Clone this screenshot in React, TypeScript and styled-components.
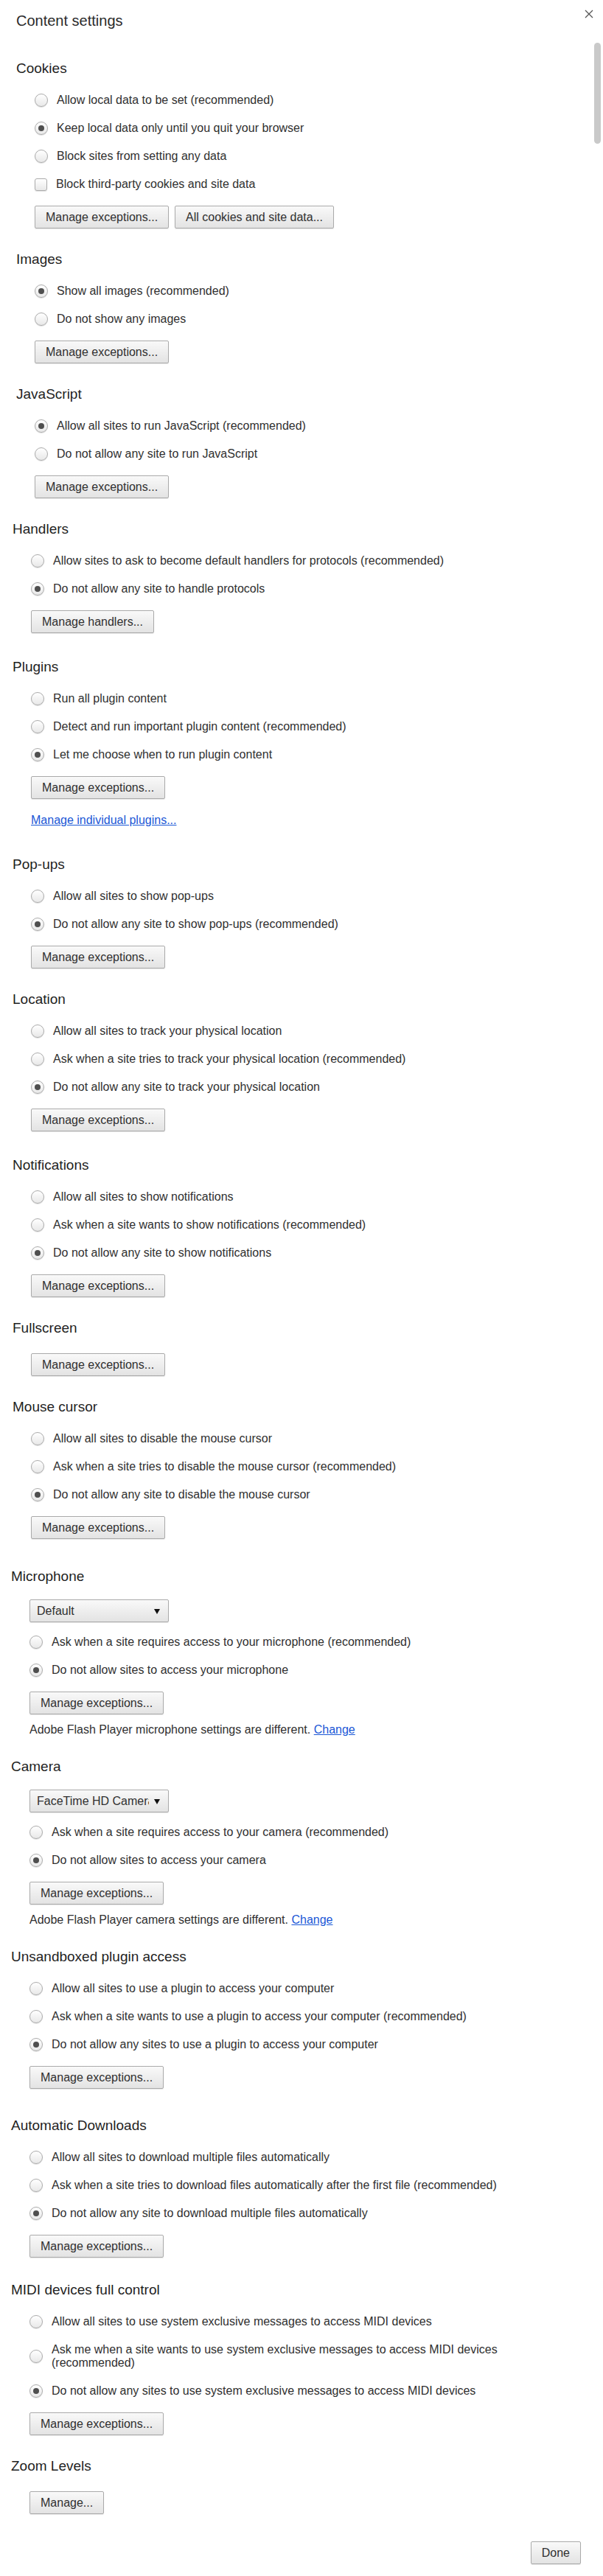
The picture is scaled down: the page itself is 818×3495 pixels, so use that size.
import React from 'react';
import styled, { createGlobalStyle } from 'styled-components';

const GlobalStyle = createGlobalStyle`
  html, body {
    margin: 0;
    padding: 0;
    background: #fff;
  }
  body {
    font-family: "Liberation Sans", Arial, Helvetica, sans-serif;
    color: #303030;
  }
`;

const Dialog = styled.div`
  position: relative;
  display: flex;
  flex-direction: column;
  width: 818px;
  height: 3495px;
  overflow: hidden;
  box-sizing: border-box;
  padding-top: 16px;
  background: #fff;
`;

const Title = styled.h1`
  margin: 0 0 11px 22px;
  font-size: 20px;
  line-height: 24px;
  font-weight: normal;
  color: #2b2b2b;
`;

const CloseButton = styled.button`
  position: absolute;
  top: 12px;
  right: 12px;
  width: 14px;
  height: 14px;
  padding: 0;
  border: 0;
  background: none;
  display: flex;
  align-items: center;
  justify-content: center;
`;

const ScrollThumb = styled.div`
  position: absolute;
  top: 58px;
  right: 3px;
  width: 9px;
  height: 137px;
  border-radius: 5px;
  background: #c9c9c9;
`;

const Section = styled.section<{ $indent: number; $gap?: number }>`
  display: flex;
  flex-direction: column;
  margin-top: ${(p) => p.$gap ?? 31}px;
  padding-left: ${(p) => p.$indent}px;
`;

const Heading = styled.h2`
  margin: 0 0 13px;
  font-size: 19px;
  line-height: 22px;
  font-weight: normal;
  color: #1f1f1f;
`;

const Body = styled.div`
  display: flex;
  flex-direction: column;
  align-items: flex-start;
  padding-left: 25px;
`;

const OptionRow = styled.label`
  display: flex;
  align-items: center;
  gap: 12px;
  padding: 10px 0;
  font-size: 16px;
  line-height: 18px;
  color: #303030;
`;

const OptionText = styled.span`
  max-width: 610px;
`;

const RadioMark = styled.span<{ $checked?: boolean }>`
  position: relative;
  flex: none;
  width: 18px;
  height: 18px;
  box-sizing: border-box;
  border-radius: 50%;
  border: 1px solid #ababab;
  background: linear-gradient(#ffffff, #e8e8e8);
  box-shadow: 0 1px 1px rgba(0, 0, 0, 0.12);

  &::after {
    content: '';
    display: ${(p) => (p.$checked ? 'block' : 'none')};
    position: absolute;
    left: 4px;
    top: 4px;
    width: 8px;
    height: 8px;
    border-radius: 50%;
    background: #4f4f4f;
  }
`;

const CheckMark = styled.span`
  flex: none;
  width: 17px;
  height: 17px;
  box-sizing: border-box;
  border-radius: 3px;
  border: 1px solid #ababab;
  background: linear-gradient(#ffffff, #e8e8e8);
  box-shadow: 0 1px 1px rgba(0, 0, 0, 0.12);
`;

const ButtonRow = styled.div`
  display: flex;
  gap: 8px;
  margin-top: 10px;
`;

const Button = styled.button`
  height: 31px;
  padding: 0 14px;
  box-sizing: border-box;
  font-family: "Liberation Sans", Arial, Helvetica, sans-serif;
  font-size: 16px;
  color: #303030;
  border: 1px solid #aaaaaa;
  border-radius: 2px;
  background: linear-gradient(#f9f9f9, #e3e3e3);
  box-shadow: 0 1px 1px rgba(0, 0, 0, 0.1);
`;

const Select = styled.div`
  position: relative;
  display: flex;
  align-items: center;
  width: 189px;
  height: 31px;
  margin: 7px 0 8px;
  padding-left: 9px;
  box-sizing: border-box;
  font-size: 16px;
  color: #303030;
  border: 1px solid #aaaaaa;
  border-radius: 2px;
  background: linear-gradient(#f9f9f9, #e3e3e3);
  box-shadow: 0 1px 1px rgba(0, 0, 0, 0.1);
`;

const SelectValue = styled.span`
  width: 152px;
  overflow: hidden;
  white-space: nowrap;
`;

const SelectArrow = styled.span`
  position: absolute;
  right: 11px;
  top: 12px;
  width: 0;
  height: 0;
  border-left: 4.5px solid transparent;
  border-right: 4.5px solid transparent;
  border-top: 7px solid #111;
`;

const Link = styled.a`
  color: #1a57d6;
  text-decoration: underline;
  cursor: pointer;
`;

const LinkLine = styled.div`
  margin: 19px 0 8px;
  font-size: 16px;
  line-height: 20px;
`;

const Note = styled.div`
  margin-top: 11px;
  font-size: 16px;
  line-height: 20px;
  color: #303030;
`;

const Footer = styled.div`
  display: flex;
  justify-content: flex-end;
  padding: 37px 30px 0 0;
`;

type Option = { label: string; checked?: boolean; checkbox?: boolean };

type SettingGroup = {
  title: string;
  indent: number;
  gap?: number;
  select?: string;
  options?: Option[];
  buttons: string[];
  link?: string;
  note?: string;
};

const groups: SettingGroup[] = [
  {
    title: 'Cookies',
    indent: 22,
    options: [
      { label: 'Allow local data to be set (recommended)' },
      { label: 'Keep local data only until you quit your browser', checked: true },
      { label: 'Block sites from setting any data' },
      { label: 'Block third-party cookies and site data', checkbox: true },
    ],
    buttons: ['Manage exceptions...', 'All cookies and site data...'],
  },
  {
    title: 'Images',
    indent: 22,
    options: [
      { label: 'Show all images (recommended)', checked: true },
      { label: 'Do not show any images' },
    ],
    buttons: ['Manage exceptions...'],
  },
  {
    title: 'JavaScript',
    indent: 22,
    options: [
      { label: 'Allow all sites to run JavaScript (recommended)', checked: true },
      { label: 'Do not allow any site to run JavaScript' },
    ],
    buttons: ['Manage exceptions...'],
  },
  {
    title: 'Handlers',
    indent: 17,
    options: [
      { label: 'Allow sites to ask to become default handlers for protocols (recommended)' },
      { label: 'Do not allow any site to handle protocols', checked: true },
    ],
    buttons: ['Manage handlers...'],
  },
  {
    title: 'Plugins',
    indent: 17,
    gap: 35,
    options: [
      { label: 'Run all plugin content' },
      { label: 'Detect and run important plugin content (recommended)' },
      { label: 'Let me choose when to run plugin content', checked: true },
    ],
    buttons: ['Manage exceptions...'],
    link: 'Manage individual plugins...',
  },
  {
    title: 'Pop-ups',
    indent: 17,
    options: [
      { label: 'Allow all sites to show pop-ups' },
      { label: 'Do not allow any site to show pop-ups (recommended)', checked: true },
    ],
    buttons: ['Manage exceptions...'],
  },
  {
    title: 'Location',
    indent: 17,
    options: [
      { label: 'Allow all sites to track your physical location' },
      { label: 'Ask when a site tries to track your physical location (recommended)' },
      { label: 'Do not allow any site to track your physical location', checked: true },
    ],
    buttons: ['Manage exceptions...'],
  },
  {
    title: 'Notifications',
    indent: 17,
    gap: 35,
    options: [
      { label: 'Allow all sites to show notifications' },
      { label: 'Ask when a site wants to show notifications (recommended)' },
      { label: 'Do not allow any site to show notifications', checked: true },
    ],
    buttons: ['Manage exceptions...'],
  },
  {
    title: 'Fullscreen',
    indent: 17,
    buttons: ['Manage exceptions...'],
  },
  {
    title: 'Mouse cursor',
    indent: 17,
    options: [
      { label: 'Allow all sites to disable the mouse cursor' },
      { label: 'Ask when a site tries to disable the mouse cursor (recommended)' },
      { label: 'Do not allow any site to disable the mouse cursor', checked: true },
    ],
    buttons: ['Manage exceptions...'],
  },
  {
    title: 'Microphone',
    indent: 15,
    gap: 40,
    select: 'Default',
    options: [
      { label: 'Ask when a site requires access to your microphone (recommended)' },
      { label: 'Do not allow sites to access your microphone', checked: true },
    ],
    buttons: ['Manage exceptions...'],
    note: 'Adobe Flash Player microphone settings are different.',
  },
  {
    title: 'Camera',
    indent: 15,
    gap: 29,
    select: 'FaceTime HD Camera',
    options: [
      { label: 'Ask when a site requires access to your camera (recommended)' },
      { label: 'Do not allow sites to access your camera', checked: true },
    ],
    buttons: ['Manage exceptions...'],
    note: 'Adobe Flash Player camera settings are different.',
  },
  {
    title: 'Unsandboxed plugin access',
    indent: 15,
    gap: 29,
    options: [
      { label: 'Allow all sites to use a plugin to access your computer' },
      { label: 'Ask when a site wants to use a plugin to access your computer (recommended)' },
      { label: 'Do not allow any sites to use a plugin to access your computer', checked: true },
    ],
    buttons: ['Manage exceptions...'],
  },
  {
    title: 'Automatic Downloads',
    indent: 15,
    gap: 39,
    options: [
      { label: 'Allow all sites to download multiple files automatically' },
      { label: 'Ask when a site tries to download files automatically after the first file (recommended)' },
      { label: 'Do not allow any site to download multiple files automatically', checked: true },
    ],
    buttons: ['Manage exceptions...'],
  },
  {
    title: 'MIDI devices full control',
    indent: 15,
    gap: 33,
    options: [
      { label: 'Allow all sites to use system exclusive messages to access MIDI devices' },
      { label: 'Ask me when a site wants to use system exclusive messages to access MIDI devices (recommended)' },
      { label: 'Do not allow any sites to use system exclusive messages to access MIDI devices', checked: true },
    ],
    buttons: ['Manage exceptions...'],
  },
  {
    title: 'Zoom Levels',
    indent: 15,
    buttons: ['Manage...'],
  },
];

const CloseIcon = () => (
  <svg width="12" height="12" viewBox="0 0 12 12">
    <path d="M1 1 L11 11 M11 1 L1 11" stroke="#555" strokeWidth="1.3" fill="none" />
  </svg>
);

const SettingSection = ({ group }: { group: SettingGroup }) => (
  <Section $indent={group.indent} $gap={group.gap}>
    <Heading>{group.title}</Heading>
    <Body>
      {group.select && (
        <Select>
          <SelectValue>{group.select}</SelectValue>
          <SelectArrow />
        </Select>
      )}
      {group.options?.map((opt) => (
        <OptionRow key={opt.label}>
          {opt.checkbox ? <CheckMark /> : <RadioMark $checked={opt.checked} />}
          <OptionText>{opt.label}</OptionText>
        </OptionRow>
      ))}
      <ButtonRow>
        {group.buttons.map((b) => (
          <Button key={b}>{b}</Button>
        ))}
      </ButtonRow>
      {group.link && (
        <LinkLine>
          <Link>{group.link}</Link>
        </LinkLine>
      )}
      {group.note && (
        <Note>
          {group.note} <Link>Change</Link>
        </Note>
      )}
    </Body>
  </Section>
);

export default function App() {
  return (
    <Dialog>
      <GlobalStyle />
      <Title>Content settings</Title>
      <CloseButton aria-label="Close">
        <CloseIcon />
      </CloseButton>
      <ScrollThumb />
      {groups.map((g) => (
        <SettingSection key={g.title} group={g} />
      ))}
      <Footer>
        <Button>Done</Button>
      </Footer>
    </Dialog>
  );
}
